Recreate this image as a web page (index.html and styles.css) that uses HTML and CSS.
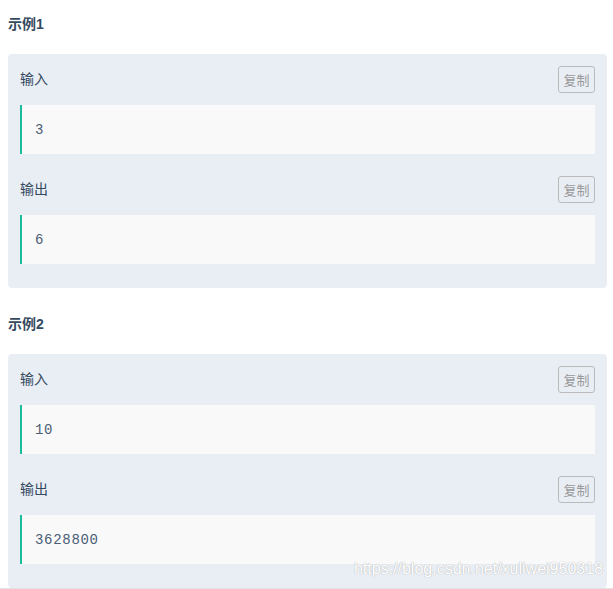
FILE: index.html
```html
<!DOCTYPE html>
<html lang="zh-CN">
<head>
    <meta charset="UTF-8">
    <meta name="viewport" content="width=device-width, initial-scale=1.0">
    <title>示例</title>
    <link rel="stylesheet" href="styles.css">
</head>
<body>
    <main class="examples">
        <h3 class="example-title">示例1</h3>
        <div class="example-box">
            <div class="io-head">
                <span class="io-label">输入</span>
                <button class="copy-btn">复制</button>
            </div>
            <pre class="io-data">3</pre>
            <div class="io-head io-second">
                <span class="io-label">输出</span>
                <button class="copy-btn">复制</button>
            </div>
            <pre class="io-data">6</pre>
        </div>

        <h3 class="example-title">示例2</h3>
        <div class="example-box">
            <div class="io-head">
                <span class="io-label">输入</span>
                <button class="copy-btn">复制</button>
            </div>
            <pre class="io-data">10</pre>
            <div class="io-head io-second">
                <span class="io-label">输出</span>
                <button class="copy-btn">复制</button>
            </div>
            <pre class="io-data">3628800</pre>
        </div>
    </main>
    <div class="page-line"></div>

    <!-- blog watermark -->
    <div class="watermark">https://blog.csdn.net/xuliwei950318</div>
</body>
</html>
```

FILE: styles.css
```css
body {
    margin: 0;
    padding: 0;
    background-color: #fff;
    color: #34495e;
    font-family: "Liberation Sans", Arial, "Noto Sans CJK SC", sans-serif;
    position: relative;
    height: 589px;
    overflow: hidden;
}
.examples {
    padding: 0 6px 0 8px;
}
.example-title {
    margin: 26px 0 20px;
    font-size: 14px;
    line-height: 20px;
    font-weight: bold;
    color: #34495e;
}
.example-title:first-child {
    margin-top: 14px;
}
.example-box {
    background-color: #e9eef5;
    border-radius: 4px;
    padding: 12px 12px 24px;
}
.io-head {
    display: flex;
    justify-content: space-between;
    align-items: center;
    height: 27px;
}
.io-second {
    margin-top: 22px;
}
.io-label {
    font-size: 14px;
    color: #34495e;
    margin-bottom: 3px;
}
.copy-btn {
    width: 37px;
    height: 27px;
    padding: 0;
    background-color: transparent;
    border: 1px solid #bbb;
    border-radius: 3px;
    color: #999;
    font-size: 13px;
    font-family: "Liberation Sans", Arial, "Noto Sans CJK SC", sans-serif;
    cursor: pointer;
}
.io-data {
    margin: 12px 0 0;
    height: 49px;
    box-sizing: border-box;
    padding: 0 13px;
    display: flex;
    align-items: center;
    background-color: #f9f9f9;
    border-left: 2px solid #1abc9c;
    font-family: "Liberation Mono", "Courier New", monospace;
    font-size: 14px;
    letter-spacing: 0.7px;
    color: #4a5d75;
}
.page-line {
    height: 1px;
    background-color: #e3e3e3;
}
.watermark {
    position: absolute;
    right: 10px;
    top: 560px;
    font-size: 16px;
    color: #fff;
    text-shadow: 0 0 1px #b8b8b8, 0 0 1px #b8b8b8;
    white-space: nowrap;
}
```
